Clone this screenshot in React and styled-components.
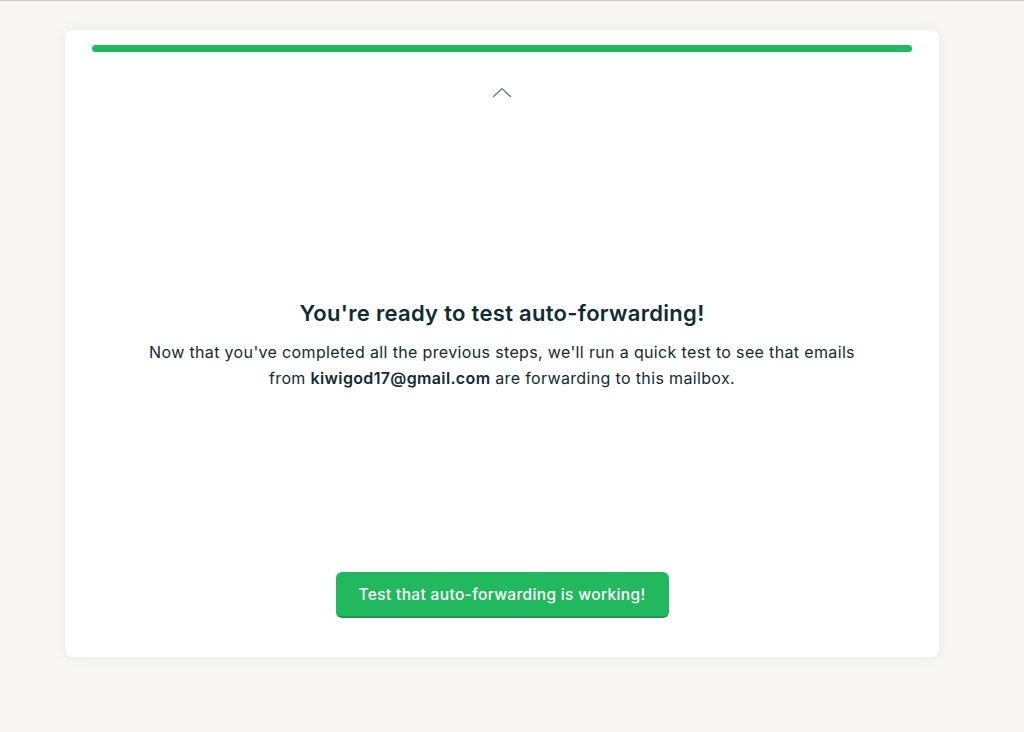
import styled, { createGlobalStyle } from "styled-components";

const GlobalStyle = createGlobalStyle`
  html, body {
    margin: 0;
    padding: 0;
    background: #f8f7f5;
    font-family: Inter, "Noto Sans", "Liberation Sans", sans-serif;
    color: #0f2c33;
  }
`;

const Page = styled.div`
  min-height: 732px;
  border-top: 1px solid #c9cbcd;
  box-sizing: border-box;
  padding: 29px 85px 0 65px;
`;

const Card = styled.div`
  width: 874px;
  height: 627px;
  box-sizing: border-box;
  background: #fff;
  border-radius: 8px;
  box-shadow: 0 0 14px rgba(0, 0, 0, 0.07);
  padding: 15px 27px 39px;
  display: flex;
  flex-direction: column;
  align-items: center;
`;

const Progress = styled.div`
  width: 100%;
  height: 7px;
  border-radius: 4px;
  background: #22b85e;
`;

const Collapse = styled.button`
  margin-top: 35px;
  border: none;
  background: none;
  padding: 0;
  display: flex;
  cursor: pointer;
`;

const Body = styled.div`
  flex: 1;
  display: flex;
  flex-direction: column;
  align-items: center;
  justify-content: center;
  text-align: center;
  padding-top: 20px;
`;

const Title = styled.h2`
  margin: 0 0 13px;
  font-size: 22px;
  font-weight: 600;
  letter-spacing: 0.3px;
  color: #0f2c33;
`;

const Text = styled.p`
  margin: 0;
  width: 716px;
  font-size: 16px;
  line-height: 26px;
  letter-spacing: 0.35px;
  color: #0f2c33;
`;

const Email = styled.strong`
  font-weight: 600;
`;

const Button = styled.button`
  width: 333px;
  height: 46px;
  border: none;
  border-bottom: 2px solid #1a9a4e;
  border-radius: 6px;
  background: #22b85e;
  color: #fff;
  font-family: inherit;
  font-size: 15.5px;
  font-weight: 500;
  letter-spacing: 0.35px;
  cursor: pointer;
`;

export default function App() {
  return (
    <>
      <GlobalStyle />
      <Page>
        <Card>
          <Progress />
          <Collapse aria-label="collapse">
            <svg width="20" height="11" viewBox="0 0 20 11" fill="none">
              <path d="M1 10L10 1.5L19 10" stroke="#5f7179" strokeWidth="1.2" />
            </svg>
          </Collapse>
          <Body>
            <Title>You're ready to test auto-forwarding!</Title>
            <Text>
              Now that you've completed all the previous steps, we'll run a quick
              test to see that emails
              <br />
              from <Email>kiwigod17@gmail.com</Email> are forwarding to this mailbox.
            </Text>
          </Body>
          <Button>Test that auto-forwarding is working!</Button>
        </Card>
      </Page>
    </>
  );
}
